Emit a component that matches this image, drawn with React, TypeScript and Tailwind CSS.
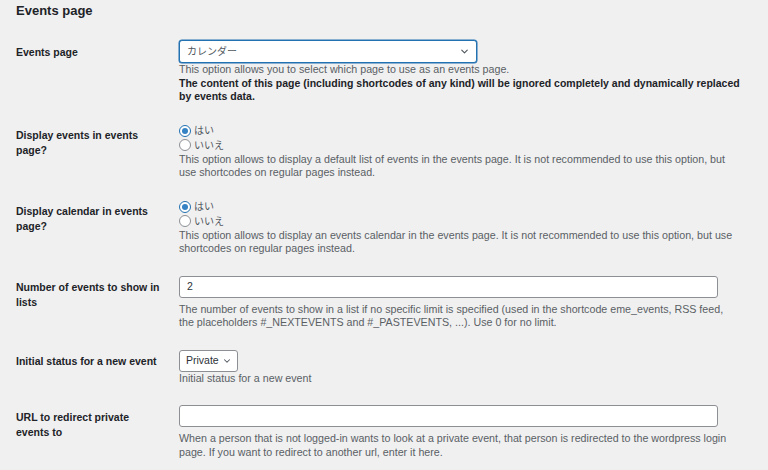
import { ChevronDown } from 'lucide-react'

const font = "font-['Liberation_Sans','Noto_Sans_CJK_JP',sans-serif]"

function Radio({ checked, label }: { checked?: boolean; label: string }) {
  return (
    <label className="flex items-center h-[14.5px] gap-[3px]">
      <span
        className={`w-[12px] h-[12px] rounded-full border bg-white flex items-center justify-center ${
          checked ? 'border-[#2271b1]' : 'border-[#8c8f94]'
        }`}
      >
        {checked && <span className="w-[6px] h-[6px] rounded-full bg-[#3582c4]" />}
      </span>
      <span className="text-[10px] text-[#50575e]">{label}</span>
    </label>
  )
}

function Row({ label, children }: { label: React.ReactNode; children: React.ReactNode }) {
  return (
    <div className="flex">
      <div className="w-[163px] shrink-0 pt-[4.5px] pr-4 text-[10.5px] leading-[15px] font-bold text-[#1d2327]">
        {label}
      </div>
      <div className="flex-1 min-w-0">{children}</div>
    </div>
  )
}

function Desc({ children }: { children: React.ReactNode }) {
  return <p className="text-[10.7px] leading-[13.5px] text-[#5a5f64] whitespace-nowrap">{children}</p>
}

export default function App() {
  return (
    <div className={`${font} bg-[#f0f0f1] w-[768px] h-[470px] overflow-hidden pl-4`}>
      <h2 className="pt-[2px] text-[13px] leading-[18px] font-bold text-[#1d2327]">Events page</h2>

      <div className="mt-[20px] flex flex-col gap-[20px]">
        {/* Events page */}
        <Row label="Events page">
          <div className="w-[298px] h-[23px] rounded-[3px] border border-[#2271b1] bg-white flex items-center justify-between pl-[7px] pr-[6px] shadow-[0_0_0_0.5px_#2271b1]">
            <span className="text-[10px] text-[#50575e]">カレンダー</span>
            <ChevronDown className="w-[11px] h-[11px] text-[#50575e]" strokeWidth={2.5} />
          </div>
          <Desc>
            This option allows you to select which page to use as an events page.
            <br />
            <strong className="text-[10.5px] text-[#1d2327]">
              The content of this page (including shortcodes of any kind) will be ignored completely and dynamically
              replaced
              <br />
              by events data.
            </strong>
          </Desc>
        </Row>

        {/* Display events */}
        <Row label={<>Display events in events<br />page?</>}>
          <Radio checked label="はい" />
          <Radio label="いいえ" />
          <Desc>
            This option allows to display a default list of events in the events page. It is not recommended to use
            this option, but
            <br />
            use shortcodes on regular pages instead.
          </Desc>
        </Row>

        {/* Display calendar */}
        <Row label={<>Display calendar in events<br />page?</>}>
          <Radio checked label="はい" />
          <Radio label="いいえ" />
          <Desc>
            This option allows to display an events calendar in the events page. It is not recommended to use this
            option, but use
            <br />
            shortcodes on regular pages instead.
          </Desc>
        </Row>

        {/* Number of events */}
        <Row label={<>Number of events to show in<br />lists</>}>
          <div className="w-[539px] h-[22px] mb-[5px] rounded-[3px] border border-[#8c8f94] bg-white flex items-center px-[7px]">
            <span className="text-[10.5px] text-[#2c3338]">2</span>
          </div>
          <Desc>
            The number of events to show in a list if no specific limit is specified (used in the shortcode
            eme_events, RSS feed,
            <br />
            the placeholders #_NEXTEVENTS and #_PASTEVENTS, ...). Use 0 for no limit.
          </Desc>
        </Row>

        {/* Initial status */}
        <Row label="Initial status for a new event">
          <div className="w-[59px] h-[22px] rounded-[3px] border border-[#8c8f94] bg-white flex items-center justify-between pl-[6px] pr-[5px]">
            <span className="text-[10.5px] text-[#2c3338]">Private</span>
            <ChevronDown className="w-[10px] h-[10px] text-[#50575e]" strokeWidth={2.5} />
          </div>
          <Desc>Initial status for a new event</Desc>
        </Row>

        {/* URL redirect */}
        <Row label={<>URL to redirect private<br />events to</>}>
          <div className="w-[539px] h-[22px] mb-[5px] rounded-[3px] border border-[#8c8f94] bg-white" />
          <Desc>
            When a person that is not logged-in wants to look at a private event, that person is redirected to the
            wordpress login
            <br />
            page. If you want to redirect to another url, enter it here.
          </Desc>
        </Row>
      </div>
    </div>
  )
}
